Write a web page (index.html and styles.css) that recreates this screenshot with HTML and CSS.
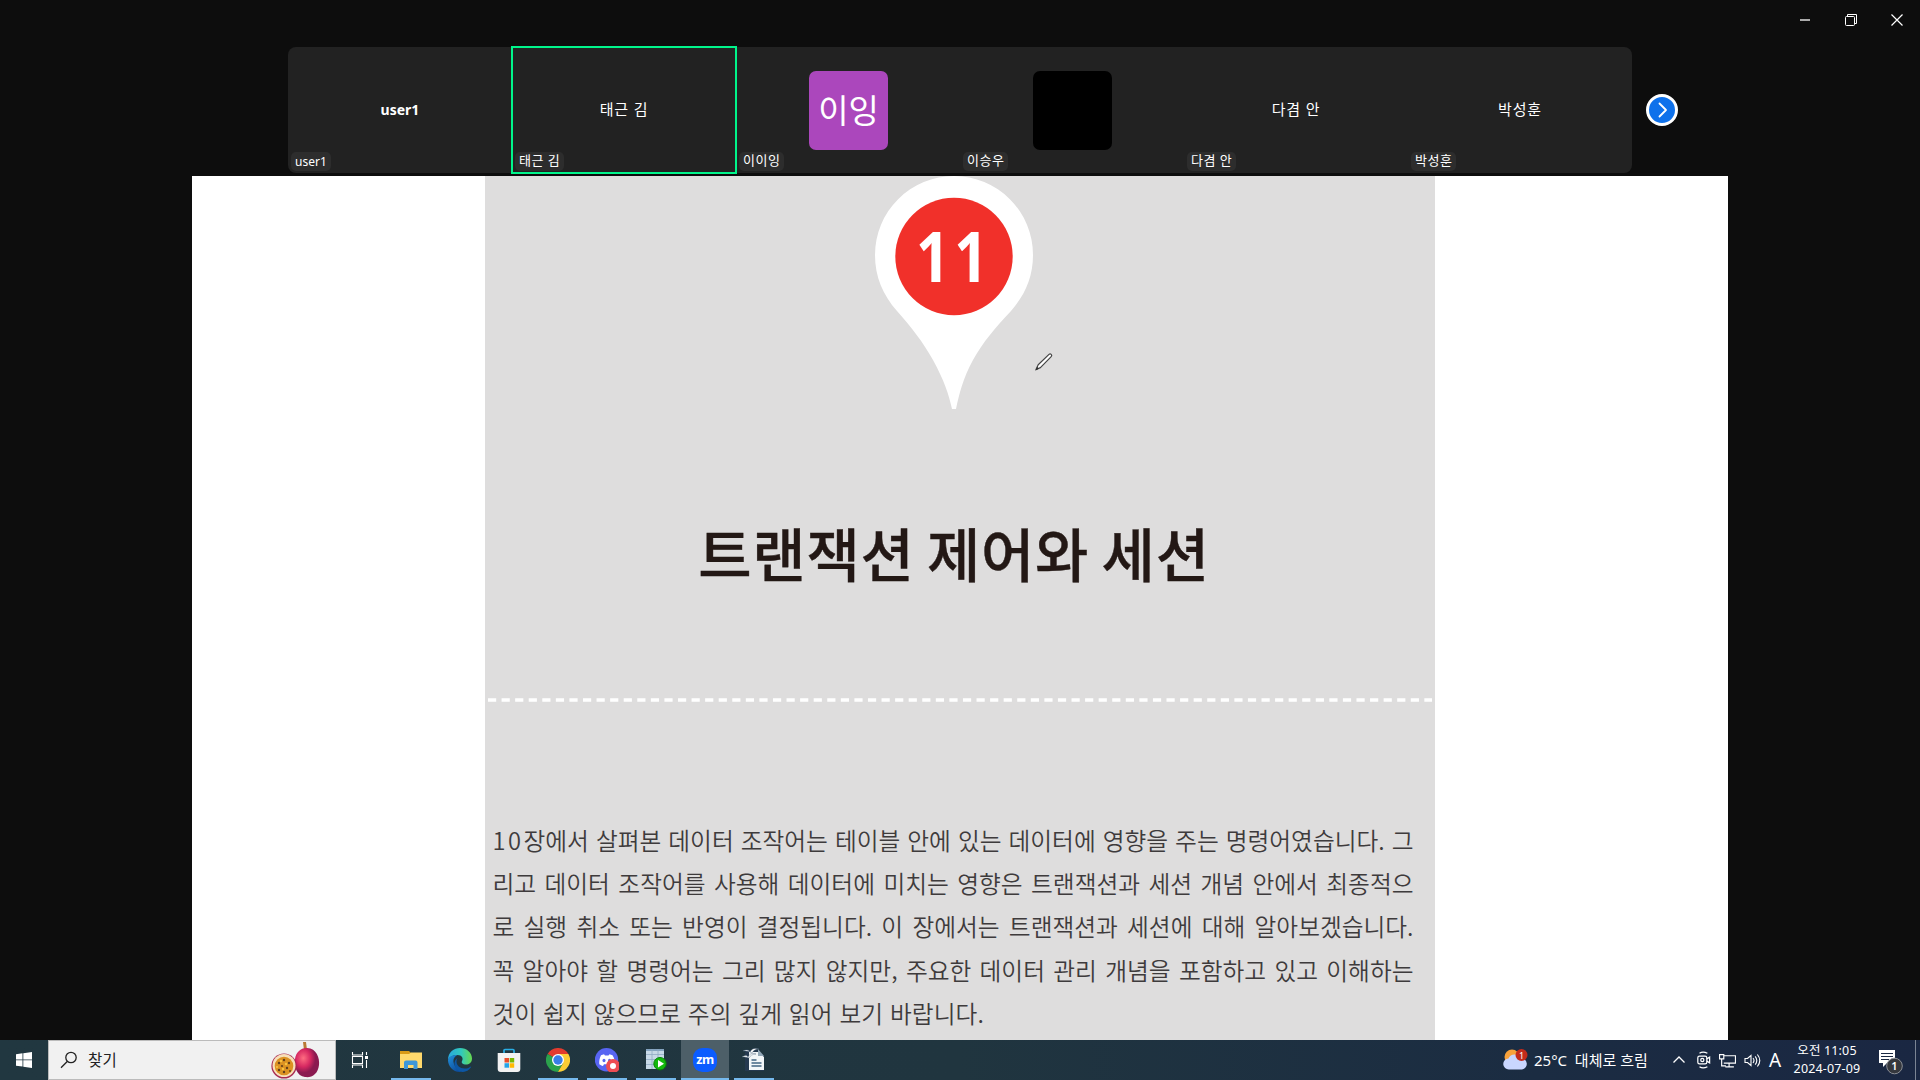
FILE: index.html
```html
<!DOCTYPE html>
<html lang="ko">
<head>
<meta charset="utf-8">
<title>Zoom</title>
<link rel="stylesheet" href="styles.css">
</head>
<body>
<div class="desktop">
  <header class="titlebar">
    <svg class="winbtn" viewBox="0 0 46 40"><path d="M18 20h10" stroke="#aaa" stroke-width="2"/></svg>
    <svg class="winbtn" viewBox="0 0 46 40"><g fill="none" stroke="#fff"><rect x="17.500" y="16.500" width="9" height="9" rx="1"/><path d="M19.500 16v-1.500h9v9H27"/></g></svg>
    <svg class="winbtn" viewBox="0 0 46 40"><path d="M17.500 14.500l11 11M28.500 14.500l-11 11" stroke="#fff" stroke-width="1.200"/></svg>
  </header>

  <section class="gallery">
    <div class="strip">
      <div class="tile"><b class="name">user1</b><span class="tag tag-latin">user1</span></div>
      <div class="tile active"><span class="name">태근 김</span><span class="tag">태근 김</span></div>
      <div class="tile"><span class="avatar purple">이잉</span><span class="tag">이이잉</span></div>
      <div class="tile"><span class="avatar black"></span><span class="tag">이승우</span></div>
      <div class="tile"><span class="name">다겸 안</span><span class="tag">다겸 안</span></div>
      <div class="tile"><span class="name">박성훈</span><span class="tag">박성훈</span></div>
    </div>
    <svg class="next" viewBox="0 0 32 32"><circle cx="16" cy="16" r="14.500" fill="#0e71eb" stroke="#fff" stroke-width="3"/><path d="M13.500 9.500l6.500 6.500-6.500 6.500" fill="none" stroke="#fff" stroke-width="1.800" stroke-linecap="round" stroke-linejoin="round"/></svg>
  </section>

  <main class="share">
    <article class="page">
      <svg class="pin" viewBox="0 0 160 234">
        <path d="M80 0A79 79 0 0 0 1 79C1 101 9 119 23 135C38 152 49 166 59 184C70 204 75 219 78 233H82C85 219 89 202 99 184C109 166 121 152 137 135C151 119 159 101 159 79A79 79 0 0 0 80 0Z" fill="#fff"/>
        <circle cx="80" cy="80.500" r="58.700" fill="#f1302a"/>
        <text class="pin-number" transform="translate(79.500 106) scale(.84 1)" x="1" y="0" text-anchor="middle">11</text>
      </svg>
      <h1 class="title">트랜잭션 제어와 세션</h1>
      <svg class="divider" viewBox="0 0 944 4"><path d="M0 2H944" stroke="#fff" stroke-width="3.600" stroke-dasharray="8.200 5.370"/></svg>
      <div class="intro">
        <p><span class="chapter">10</span>장에서 살펴본 데이터 조작어는 테이블 안에 있는 데이터에 영향을 주는 명령어였습니다. 그</p>
        <p>리고 데이터 조작어를 사용해 데이터에 미치는 영향은 트랜잭션과 세션 개념 안에서 최종적으</p>
        <p>로 실행 취소 또는 반영이 결정됩니다. 이 장에서는 트랜잭션과 세션에 대해 알아보겠습니다.</p>
        <p>꼭 알아야 할 명령어는 그리 많지 않지만, 주요한 데이터 관리 개념을 포함하고 있고 이해하는</p>
        <p class="last">것이 쉽지 않으므로 주의 깊게 읽어 보기 바랍니다.</p>
      </div>
      <svg class="pencil" viewBox="0 0 20 20"><path d="M2 17.500l2.200-4.700L15 2.400a1.500 1.500 0 0 1 2.200 2.200L6.400 15.600z" fill="#fff" stroke="#444" stroke-width="1.200" stroke-linejoin="round"/><path d="M1.200 18.800l2-4 1.800 2z" fill="#333"/></svg>
    </article>
  </main>

  <footer class="taskbar">
    <div class="start"><svg width="16" height="16" viewBox="0 0 16 16"><path d="M0 2.200L6.500 1.300V7.500H0zM7.300 1.200L16 0v7.500H7.300zM0 8.300h6.500v6.300L0 13.700zM7.300 8.300H16V16l-8.700-1.300z" fill="#fff"/></svg></div>
    <div class="search">
      <svg width="18" height="18" viewBox="0 0 18 18"><g fill="none" stroke="#222" stroke-width="1.300"><circle cx="11" cy="6.500" r="5.200"/><path d="M7.200 10.500L1 16.700"/></g></svg>
      <span class="search-text">찾기</span>
      <svg class="fruit" width="50" height="38" viewBox="0 0 50 38">
        <defs><radialGradient id="fruit" cx=".35" cy=".35"><stop offset="0" stop-color="#ff6d81"/><stop offset=".6" stop-color="#d62861"/><stop offset="1" stop-color="#8b1a50"/></radialGradient></defs>
        <path d="M32 1h3l1 8h-3z" fill="#b97a35"/>
        <path d="M35 7C45 6 49 17 48 24C47 33 41 37 34 36C26 35 23 26 24 18C25 11 30 7 35 7Z" fill="url(#fruit)"/>
        <circle cx="13" cy="25" r="12.600" fill="#a72850"/><circle cx="13" cy="24.500" r="11.500" fill="#f7dfb9"/><circle cx="13" cy="25" r="9.300" fill="#dc9222"/>
        <g fill="#63401b"><circle cx="8" cy="22" r="1.200"/><circle cx="13" cy="19" r="1.200"/><circle cx="18" cy="22" r="1.200"/><circle cx="11" cy="25" r="1.100"/><circle cx="16" cy="27" r="1.200"/><circle cx="8" cy="29" r="1.200"/><circle cx="13" cy="31" r="1.200"/><circle cx="19" cy="30" r="1"/></g>
        <g fill="#f8c441"><circle cx="10" cy="20" r="1.200"/><circle cx="15" cy="23" r="1.200"/><circle cx="12" cy="28" r="1.200"/><circle cx="6" cy="26" r="1"/></g>
      </svg>
    </div>
    <div class="task"><svg width="18" height="18" viewBox="0 0 18 18"><path d="M1.500 1v3h10V1M1.500 17v-3h10v3M1.500 5.500h10v7h-10zM15.500 1v3M15.500 9v8" fill="none" stroke="#fff" stroke-width="1.100"/><path d="M14 5h3v3h-3z" fill="#fff"/></svg></div>

    <nav class="apps">
      <div class="app open"><svg viewBox="0 0 24 24"><path d="M1 3h9l2 2h11v15H1z" fill="#d99a16"/><path d="M1 6h9l2-1.500h11V20H1z" fill="#ffd96c"/><path d="M5 20v-5.500a2 2 0 0 1 2-2h9.500a2 2 0 0 1 2 2V21h-4v-4H9v4H5z" fill="#3d97d8"/></svg></div>
      <div class="app"><svg viewBox="0 0 24 24"><defs><linearGradient id="edgeTop"><stop stop-color="#28a8df"/><stop offset=".55" stop-color="#31c9bd"/><stop offset="1" stop-color="#67d94f"/></linearGradient><linearGradient id="edgeLow" x2=".7" y2="1"><stop stop-color="#2191dc"/><stop offset="1" stop-color="#0d4b99"/></linearGradient></defs><path d="M0 12C0 4 6 0 12 0c7 0 12 5 12 10.500 0 4-3 6-6 6s-5-1.500-4-3.500c1.500-2.500 0-6-4.500-6C5 7 1 9 0 12z" fill="url(#edgeTop)"/><path d="M0 12C1 8.500 5 6.800 9.500 7c-3 1.500-4.500 4-4 7 .6 4 4 7.500 8 9.800C6 25 0 19 0 12z" fill="url(#edgeLow)"/><path d="M9.500 10c-3 5 1 11 8 10.500 2 0 4-1 5-1.800.5-.3.800 0 .4.600C20.500 23 16 25 12 23.500 6.500 21.500 4 14 9.500 10z" fill="#0d57a4"/></svg></div>
      <div class="app"><svg viewBox="0 0 24 24"><path d="M7 6V2.500Q7 1.500 8 1.500h8q1 0 1 1V6" fill="none" stroke="#29aee4" stroke-width="1.700"/><path d="M.7 5h22.600v16q0 3-3 3H3.700q-3 0-3-3z" fill="#f2f2f2"/><path d="M7.500 10H12v4.500H7.500z" fill="#e94e2b"/><path d="M12.700 10h4.500v4.500h-4.500z" fill="#79b800"/><path d="M7.500 15.200H12v4.500H7.500z" fill="#24a4e8"/><path d="M12.700 15.200h4.500v4.500h-4.500z" fill="#ffb900"/></svg></div>
      <div class="app open"><svg viewBox="0 0 24 24"><path d="M12 12L1.600 6A12 12 0 0 1 22.400 6z" fill="#e33b2e"/><path d="M1.600 6A12 12 0 0 0 12 24l5.200-9z" fill="#2ba24c"/><path d="M22.400 6A12 12 0 0 1 12 24l5.200-9L12 6z" fill="#fccd35"/><circle cx="12" cy="12" r="6" fill="#fff"/><circle cx="12" cy="12" r="4.700" fill="#397ee8"/></svg></div>
      <div class="app open"><svg viewBox="0 0 24 24"><circle cx="11.500" cy="11.700" r="11.700" fill="#5865f2"/><path d="M6 7.200l3-1 1 1.300h3.500l1-1.300 3 1c2 3 2.500 6 2.200 9-1.700 1.200-2.500 1.500-3.700 1.800l-1-1.800H9l-1 1.800c-1.500-.4-2.500-.9-3.700-1.800-.3-3 .2-6 1.700-9z" fill="#fff"/><ellipse cx="9" cy="12.500" rx="1.500" ry="1.800" fill="#5865f2"/><ellipse cx="14.500" cy="12.500" rx="1.500" ry="1.800" fill="#5865f2"/><circle cx="18" cy="18" r="7" fill="#ee4c52"/><circle cx="18" cy="18" r="3" fill="#fff"/></svg></div>
      <div class="app open"><svg viewBox="0 0 24 24"><path d="M2 1h18v20H2z" fill="#c8d9e7"/><path d="M2 1h18v2H2z" fill="#84a3bf"/><path d="M2 6.500h18M2 11.500h18M2 16.500h18M8 1v20M14 1v20" stroke="#8fabc4" stroke-width=".8"/><circle cx="16" cy="15.700" r="6.200" fill="#13b90c" stroke="#088107"/><path d="M14 12l6 3.700-6 3.700z" fill="#fff"/></svg></div>
      <div class="app open current"><svg viewBox="0 0 24 24"><rect width="24" height="24" rx="9.500" fill="#0b5cff"/><text class="zm" x="12" y="16" text-anchor="middle">zm</text></svg></div>
      <div class="app open"><svg viewBox="0 0 24 24"><path d="M3 2h13l6 6v15H3z" fill="#25394f"/><path d="M7 4h9l6 5v13H7z" fill="#f2f6f8"/><path d="M16 1v7h6z" fill="#92a7b7"/><path d="M9.500 12h5M9.500 15h10M9.500 18h10" stroke="#426583" stroke-width="1.300"/><path d="M1 3c4-2 6-1 7 1 2-4 5-4 9-3-4 0-6 2-7 4-3-2-5-2-9-2zm-1 6c3-2 5-2 6 0 2-4 5-4 8-3-4 0-6 2-7 4-2-1-4-1-7-1z" fill="#fff" stroke="#415c74" stroke-width=".4"/></svg></div>
    </nav>

    <div class="tray">
      <svg class="weather" viewBox="0 0 26 24"><circle cx="9" cy="9" r="7.500" fill="#f8a23b"/><path d="M6 21.500a5.500 5.500 0 0 1-.5-11 6.500 6.500 0 0 1 12 0 5.500 5.500 0 0 1 1.500 11z" fill="#c9d6ff"/><circle cx="18.500" cy="7" r="6" fill="#c42b1c"/><text class="badge" x="18.500" y="10.500" text-anchor="middle">1</text></svg>
      <span class="forecast">25°C&nbsp; 대체로 흐림</span>
      <svg class="chevron" viewBox="0 0 14 16"><path d="M1.500 10.500L7 5l5.500 5.500" fill="none" stroke="#fff" stroke-width="1.300"/></svg>
      <svg class="tray-icon cam" viewBox="0 0 16 16"><g fill="none" stroke="#fff" stroke-width="1.100"><rect x="2.500" y="4.500" width="8" height="7" rx="1.500"/><circle cx="6.500" cy="8" r="1.400"/><path d="M10.500 7l2.500-1.500v5L10.500 9M4 2q3-2.200 7 0M4 14q3 2.200 7 0"/></g></svg>
      <svg class="tray-icon net" viewBox="0 0 16 16"><path d="M5 3.500h10.500v7H4.500M9.500 10.500v3M6 14h8M.5 2.500h4v4h-4zM2.500 6.500V13h4" fill="none" stroke="#fff" stroke-width="1.100"/></svg>
      <svg class="tray-icon vol" viewBox="0 0 17 16"><path d="M1 6h2.500L7 3v10L3.500 10H1zM9 5.500q2 2.500 0 5M11.200 3.800q3.200 4.200 0 8.400M13.400 2q4.800 6 0 12" fill="none" stroke="#fff" stroke-width="1.100"/></svg>
      <span class="ime">A</span>
      <div class="clock"><span>오전 11:05</span><span>2024-07-09</span></div>
      <svg class="notice" viewBox="0 0 26 26"><path d="M1 1h16v13H9l-4 4v-4H1z" fill="#fff"/><path d="M3 4.500h12M3 7.500h12M3 10.500h8" stroke="#1b2942" stroke-width="1.100"/><circle cx="16.500" cy="17" r="7.800" fill="#34373d" stroke="#8b8e94"/><text class="count" x="16.500" y="21" text-anchor="middle">1</text></svg>
    </div>
  </footer>
</div>
</body>
</html>
```
FILE: styles.css
```css
* { box-sizing: border-box; }
body { margin: 0; background: #0d0d0d; overflow: hidden; font-family: "Noto Sans", "Noto Sans CJK KR", sans-serif; }
svg { display: block; flex: none; }
.desktop { width: 1920px; height: 1080px; display: flex; flex-direction: column; }

.titlebar { height: 47px; display: flex; justify-content: flex-end; }
.winbtn { width: 46px; height: 40px; }

.gallery { height: 129px; display: flex; align-items: flex-start; padding-left: 288px; }
.strip { width: 1344px; height: 126px; display: grid; grid-template-columns: repeat(6, 224px); background: #222; border-radius: 8px; }
.tile { position: relative; display: flex; align-items: center; justify-content: center; color: #fff; }
.active { outline: 2px solid #00f58b; outline-offset: -1px; }
.name { font-size: 15px; line-height: 20px; margin-top: -2px; letter-spacing: .8px; }
b.name { font-size: 14px; margin-top: 0; letter-spacing: 0; }
.tag { position: absolute; left: 3px; bottom: 2px; height: 19px; padding: 0 4px; border-radius: 5px; background: #2d2d2d; font-size: 13px; line-height: 16px; letter-spacing: .5px; white-space: nowrap; }
.tag-latin { font-size: 12px; line-height: 19px; letter-spacing: 0; }
.avatar { width: 79px; height: 79px; margin: 1px 0 0 1px; border-radius: 7px; display: flex; align-items: center; justify-content: center; font-size: 33px; line-height: 79px; }
.purple { background: #ab47bc; }
.black { background: #000; }
.next { width: 32px; height: 32px; margin: 47px 0 0 14px; }

.share { width: 1536px; height: 864px; margin-left: 192px; background: #fff; display: flex; padding-left: 293px; overflow: hidden; }
.page { position: relative; width: 950px; height: 864px; background: #dedddd; display: flex; flex-direction: column; align-items: center; }
.pin { width: 160px; height: 234px; margin-left: -12px; }
.pin-number { font: 700 70px "Noto Sans", sans-serif; fill: #fff; letter-spacing: 5.500px; }
.title { margin: 100px 0 0 -12px; height: 84px; font: 500 58px/84px "Noto Sans CJK KR", sans-serif; color: #231815; white-space: nowrap; letter-spacing: .7px; word-spacing: -4.500px; -webkit-text-stroke: .4px #231815; }
.divider { width: 944px; height: 4px; margin: 104px 0 0 0; }
.intro { width: 921px; margin: 117px 14px 0 0; color: #3e3b3c; font: 350 23.700px/43.200px "Noto Sans CJK KR", sans-serif; }
.intro p { margin: 0; height: 43.200px; text-align-last: justify; white-space: nowrap; }
.intro .last { text-align-last: left; letter-spacing: .1px; }
.chapter { letter-spacing: 2.500px; }
.pencil { position: absolute; left: 549px; top: 176px; width: 20px; height: 20px; }

.taskbar { height: 40px; display: flex; background: linear-gradient(90deg, #213740, #20353f 50%, #1b2c42 80%, #1a2742); color: #fff; border-right: 1px solid #1a2742; }
.start, .task { width: 48px; display: flex; align-items: center; justify-content: center; }
.search { width: 288px; border: 1px solid #bbb; background: #f1f1f1; display: flex; align-items: center; padding-left: 11px; color: #222; }
.search-text { font-size: 15.500px; margin: -1px 0 0 10px; line-height: 20px; letter-spacing: .3px; flex: 1; }
.fruit { margin-right: 14px; }
.task { width: 51px; padding-right: 3px; }
.apps { display: flex; gap: 1px; }
.app { width: 48px; height: 40px; display: flex; justify-content: center; align-items: center; }
.app svg { width: 24px; height: 24px; }
.open { background: linear-gradient(#76b9ed, #76b9ed) center bottom / 40px 2px no-repeat; }
.current { background: linear-gradient(#76b9ed, #76b9ed) center bottom / 48px 2px no-repeat #4d5f68; }
.zm { font: 700 12.500px "Noto Sans", sans-serif; letter-spacing: -.4px; fill: #fff; }

.tray { flex: 1; display: flex; align-items: center; justify-content: flex-end; padding-right: 11px; border-right: 1px solid #7b8493; margin-right: 3px; }
.weather { width: 26px; height: 24px; margin-right: 5px; }
.badge { font-size: 9px; fill: #fff; }
.forecast { width: 138px; font-size: 15px; line-height: 20px; margin-top: -1px; white-space: nowrap; }
.chevron { width: 14px; height: 16px; }
.tray-icon { width: 16px; height: 16px; margin-left: 8px; }
.cam { width: 18px; height: 18px; margin-left: 9px; }
.net { margin-left: 6px; width: 17px; height: 17px; }
.vol { width: 17px; height: 17px; }
.ime { width: 14px; margin-left: 7px; font-size: 19px; line-height: 24px; text-align: center; }
.clock { width: 68px; margin-left: 11px; display: flex; flex-direction: column; align-items: center; font-size: 12.500px; line-height: 18px; letter-spacing: .15px; white-space: nowrap; }
.notice { width: 26px; height: 26px; margin: 4px 0 0 17px; }
.count { font-size: 11px; font-weight: 600; fill: #fff; }
```
